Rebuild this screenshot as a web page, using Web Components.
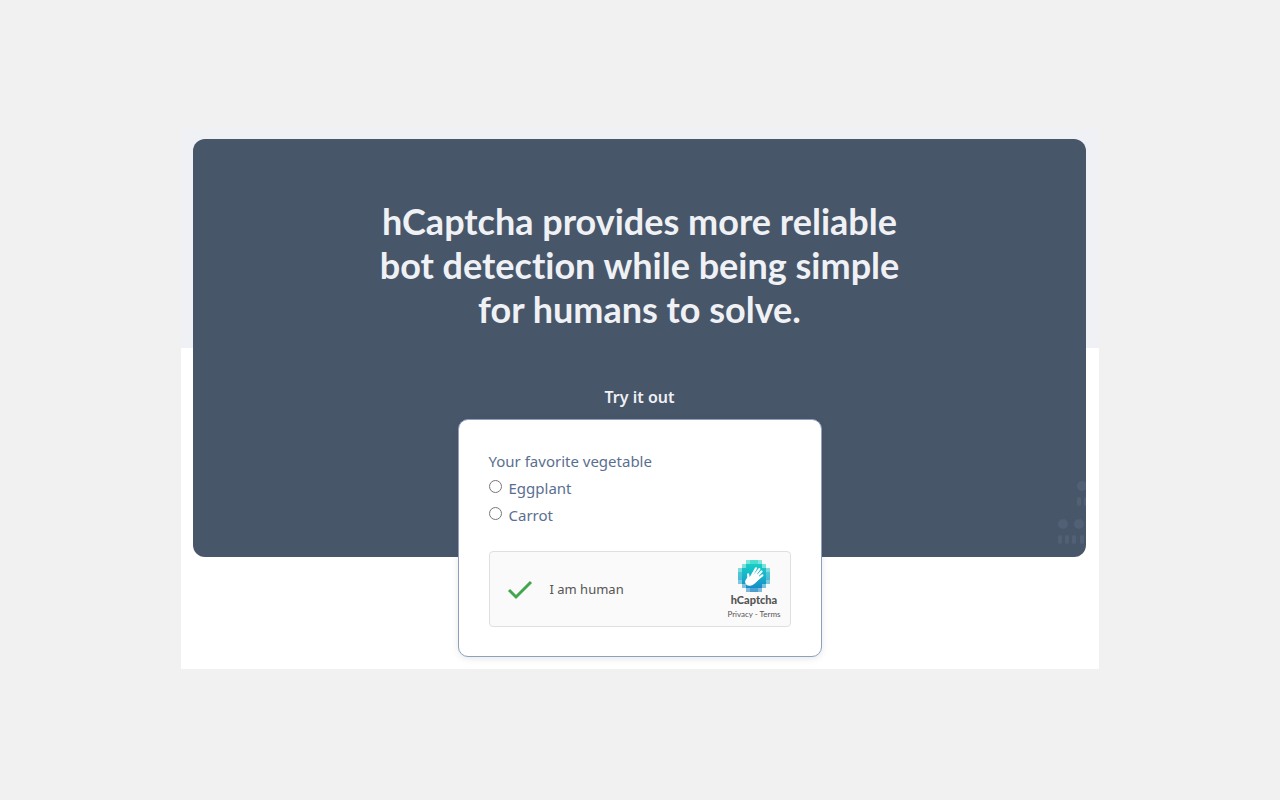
<!DOCTYPE html>
<html lang="en"><head><meta charset="utf-8"><title>hCaptcha</title>
<style>
html{background:#f1f1f1}
body{margin:0;font-family:"Noto Sans",sans-serif}
</style></head><body>
<hc-page></hc-page>
<script>
const define = (name, html) => customElements.define(name, class extends HTMLElement {
  constructor() {
    super();
    const t = document.createElement('template');
    t.innerHTML = html;
    this.attachShadow({ mode: 'open' }).append(document.importNode(t.content, true));
  }
});

define('hc-mark', `
<style>:host{display:block;width:32px;height:32px}svg{display:block}</style>
<svg width="32" height="32" viewBox="0 0 32 32" aria-hidden="true">
<defs><linearGradient id="g" gradientUnits="userSpaceOnUse" x1="0" y1="0" x2="0" y2="32"><stop offset="0" stop-color="#00d4bc"/><stop offset=".5" stop-color="#00acc6"/><stop offset="1" stop-color="#0074bf"/></linearGradient></defs>
<g fill="url(#g)" shape-rendering="crispEdges">
<path opacity=".5" d="M8 0h16v4h4v4h4v16h-4v4h-4v4H8v-4H4v-4H0V8h4V4h4z"/>
<path opacity=".4" d="M12 0h8v4h4v4h4v4h4v8h-4v4h-4v4h-4v4h-8v-4H8v-4H4v-4H0v-8h4V8h4V4h4z"/>
<path opacity=".7" d="M8 4h16v4h4v16h-4v4H8v-4H4V8h4z"/></g>
<g stroke="#fff" stroke-linecap="round" stroke-linejoin="round" fill="none">
<path fill="#fff" stroke="none" d="M9.800 15c.9 2.500-2.700 4-2.700 7 0 2.500 2.300 4 5 3.800 3-.2 4.600-2 7-4.500l3-3-4-6-4.500 4-3 2z"/>
<path stroke-width="2.200" d="M12.700 17.500L18 8.300M15 17.500l6.300-8.300M17 18.500l6.500-7M18 20.500l6.300-5.200M10.800 19l-.7-4.700"/></g>
</svg>`);

define('hc-widget', `
<style>
:host{display:flex;box-sizing:border-box;height:76px;border:1px solid #e0e0e0;border-radius:4px;background:#fafafa;align-items:center;padding:0 9px 0 16px;color:#555}
svg{display:block}
.label{font-size:13px;line-height:20px;flex:1;padding-left:16px}
.brand{display:flex;flex-direction:column;align-items:center;padding-top:1px}
b{font-family:Lato,sans-serif;font-weight:900;font-size:11px;line-height:16px}
.links{font-family:Lato,sans-serif;font-size:8px;line-height:12px;white-space:nowrap}
a{color:inherit;text-decoration:none}
</style>
<svg width="28" height="28" viewBox="0 0 28 28" fill="none" stroke="#43a54d" stroke-width="3" role="img" aria-label="Verified"><path d="M3 15l7 7L25 7"/></svg>
<span class="label">I am human</span>
<div class="brand"><hc-mark></hc-mark><b>hCaptcha</b><span class="links"><a href="#privacy">Privacy</a> - <a href="#terms">Terms</a></span></div>`);

define('hc-form', `
<style>
:host{display:block;box-sizing:border-box;width:364px;max-width:100%;background:#fff;border:1px solid #8fa0bc;border-radius:10px;padding:28px 30px 29px;color:#5a6f90;font-size:15px;line-height:27px;box-shadow:0 2px 6px rgba(60,75,100,.12)}
form,fieldset{margin:0;padding:0;border:0;min-width:0}
legend{padding:0}
label{display:flex;align-items:flex-start;gap:7px}
input{margin:5px 0 0;width:13px;height:13px}
hc-widget{margin-top:22px}
</style>
<form><fieldset><legend>Your favorite vegetable</legend>
<label><input type="radio" name="vegetable" value="eggplant">Eggplant</label>
<label><input type="radio" name="vegetable" value="carrot">Carrot</label></fieldset>
<hc-widget></hc-widget></form>`);

define('hc-crowd', `
<style>:host{display:block}svg{display:block}</style>
<svg width="28" height="66" viewBox="0 0 28 66" fill="#516074" aria-hidden="true">
<circle cx="24" cy="6" r="5"/><rect x="19" y="17" width="4" height="9" rx="2"/><rect x="26" y="17" width="4" height="9" rx="2"/>
<circle cx="5" cy="44" r="5"/><circle cx="21" cy="44" r="5"/>
<rect x="0" y="55" width="4" height="9" rx="2"/><rect x="7" y="55" width="4" height="9" rx="2"/><rect x="14" y="55" width="4" height="9" rx="2"/><rect x="22" y="55" width="4" height="9" rx="2"/>
</svg>`);

define('hc-page', `
<style>
:host{display:flex;min-height:100vh;box-sizing:border-box;justify-content:center;align-items:center;padding-bottom:2px}
main{box-sizing:border-box;width:100%;max-width:918px;padding:10px 13px 12px 12px;background:linear-gradient(#eff1f5 219px,#fff 0);display:grid;grid-template:auto 138px auto / 1fr}
.panel{grid-area:1/1/3/2;background:#48566a;border-radius:12px;overflow:hidden;display:flex;justify-content:flex-end;align-items:flex-end;padding-bottom:11px}
header{grid-area:1/1;text-align:center;color:#eff1f5;padding:60px 16px 10px}
h1{margin:0 auto;max-width:540px;font-family:Lato,sans-serif;font-weight:700;font-size:36px;line-height:44px;font-variant-ligatures:none}
h2{margin:54px 0 0;font-weight:600;font-size:16px;line-height:24px}
hc-form{grid-area:2/1/4/2;justify-self:center}
</style>
<main><div class="panel"><hc-crowd></hc-crowd></div>
<header><h1>hCaptcha provides more reliable bot detection while being simple for humans to solve.</h1><h2>Try it out</h2></header>
<hc-form></hc-form></main>`);
</script></body></html>
